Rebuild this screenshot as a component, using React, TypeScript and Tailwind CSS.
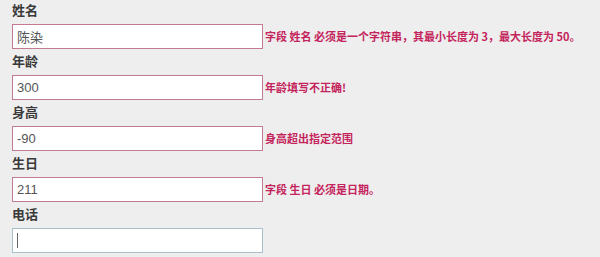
import React from "react";

const fields = [
  { label: "姓名", value: "陈染", error: "字段 姓名 必须是一个字符串，其最小长度为 3，最大长度为 50。" },
  { label: "年龄", value: "300", error: "年龄填写不正确!" },
  { label: "身高", value: "-90", error: "身高超出指定范围" },
  { label: "生日", value: "211", error: "字段 生日 必须是日期。" },
  { label: "电话", value: "", error: "" },
];

const App = () => {
  return (
    <div className="w-[600px] h-[257px] bg-[#eeeeee] overflow-hidden pl-[12px] font-['Liberation_Sans','Noto_Sans_CJK_SC',sans-serif]">
      <div className="-mt-[2px]">
        {fields.map((field) => (
          <div key={field.label}>
            {/* Label */}
            <div className="h-[26px] pt-[3px] leading-[18px] text-[13px] font-bold text-[#3a3a3a] font-['Noto_Sans_CJK_SC',sans-serif]">
              {field.label}
            </div>

            {/* Input + validation message */}
            <div className="flex items-center h-[25px]">
              <div className="relative">
                <input
                  readOnly
                  value={field.value}
                  className={`block w-[251px] h-[25px] bg-white border px-[4px] text-[13px] text-[#555555] outline-none ${
                    field.error ? "border-[#c47b92]" : "border-[#a9bfcb]"
                  }`}
                />
                {!field.error && (
                  <span className="absolute left-[5px] top-[5px] w-px h-[15px] bg-[#666666]" />
                )}
              </div>
              {field.error && (
                <span className="ml-[2px] text-[11px] font-bold text-[#c4245c] whitespace-nowrap font-['Noto_Sans_CJK_SC',sans-serif]">
                  {field.error}
                </span>
              )}
            </div>
          </div>
        ))}
      </div>
    </div>
  );
};

export default App;
